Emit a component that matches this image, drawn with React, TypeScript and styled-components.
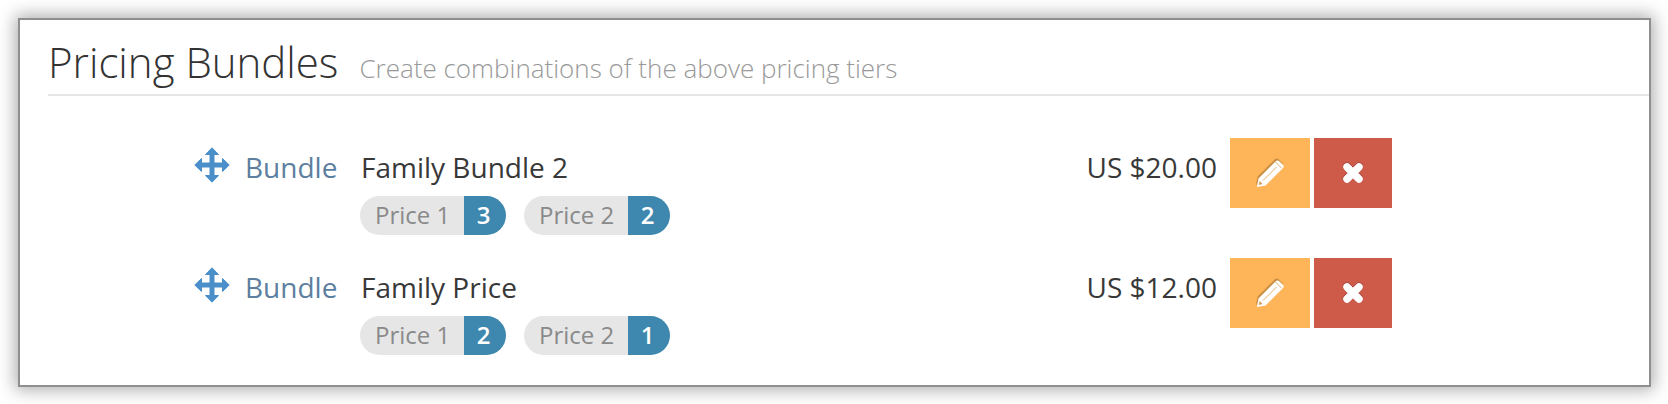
import React from 'react';
import styled, { createGlobalStyle } from 'styled-components';

const GlobalStyle = createGlobalStyle`
    html, body {
        margin: 0;
        padding: 0;
        background: #ffffff;
    }
    body {
        width: 1668px;
        height: 404px;
        overflow: hidden;
        font-family: "Open Sans", "Liberation Sans", sans-serif;
    }
`;

const Page = styled.div`
    padding: 18px 17px 17px 18px;
    box-sizing: border-box;
    width: 1668px;
    height: 404px;
`;

const Window = styled.div`
    box-sizing: border-box;
    height: 369px;
    background: #ffffff;
    border: 2px solid #8f8f8f;
    box-shadow: 0 0 16px 3px rgba(0, 0, 0, 0.32);
    padding: 0 0 0 28px;
`;

const Header = styled.div`
    display: flex;
    align-items: baseline;
    height: 76px;
    box-sizing: border-box;
    padding: 19px 0 0 0;
    border-bottom: 2px solid #e5e5e5;
`;

const Title = styled.h1`
    margin: 0;
    font-size: 42px;
    line-height: 46px;
    font-weight: 300;
    color: #333333;
`;

const Subtitle = styled.span`
    margin-left: 21px;
    font-size: 26px;
    font-weight: 300;
    color: #999999;
`;

const List = styled.div`
    display: flex;
    flex-direction: column;
    gap: 50px;
    padding: 42px 0 0 146px;
`;

const Row = styled.div`
    display: flex;
    align-items: flex-start;
    height: 70px;
`;

const Handle = styled.svg`
    width: 36px;
    height: 36px;
    margin-top: 9px;
    fill: #4a8fc9;
    stroke: #4a8fc9;
    stroke-width: 1;
    stroke-linejoin: round;
`;

const Kind = styled.span`
    margin: 10px 0 0 15px;
    width: 116px;
    font-size: 28px;
    line-height: 38px;
    color: #5d7f9f;
`;

const Info = styled.div`
    width: 638px;
`;

const Name = styled.div`
    padding-top: 10px;
    font-size: 28px;
    line-height: 38px;
    color: #383838;
`;

const Tags = styled.div`
    display: flex;
    gap: 18px;
    margin: 10px 0 0 -1px;
`;

const Tag = styled.div`
    display: flex;
    height: 39px;
    font-size: 24px;
    line-height: 38px;
    border-radius: 19.5px;
    overflow: hidden;
`;

const TagLabel = styled.span`
    width: 104px;
    padding-left: 15px;
    box-sizing: border-box;
    background: #e6e6e6;
    color: #8a8a8a;
`;

const TagCount = styled.span`
    width: 42px;
    padding-right: 3px;
    box-sizing: border-box;
    text-align: center;
    background: #3e87ae;
    color: #ffffff;
    font-weight: 600;
`;

const Price = styled.div`
    width: 218px;
    padding-top: 10px;
    text-align: right;
    font-size: 28px;
    line-height: 38px;
    color: #383838;
`;

const Actions = styled.div`
    display: flex;
    gap: 4px;
    margin-left: 13px;
`;

const ActionButton = styled.button<{ $color: string; $width: number }>`
    display: flex;
    align-items: center;
    justify-content: center;
    width: ${p => p.$width}px;
    height: 70px;
    padding: 0;
    border: 0;
    color: #ffffff;
    background: ${p => p.$color};
`;

const MoveIcon = () => (
    <Handle viewBox="0 0 36 36">
        <path d="M18 .8l6.500 6.700H20v8.500h8.500V11.500l6.700 6.500-6.700 6.500V20H20v8.500h4.500L18 35.200l-6.500-6.700H16V20H7.500v4.500L.8 18l6.700-6.500V16H16V7.500h-4.500z" />
    </Handle>
);

const PencilIcon = () => (
    <svg width="30" height="30" viewBox="0 0 30 30">
        <path fill="#c98f45" d="M1 27l1.500-8.500L19.500 1.500c1.500-1.500 3-1.500 4.500 0l4 4.500-8 1.500L8 20z" />
        <path fill="#ffffff" d="M2 29l1.500-8.500L20.500 3.500c1.500-1.500 2.500-1.500 4 0l3 3c1.500 1.500 1.500 2.500 0 4L10.500 27.500z" />
        <path fill="none" stroke="#d69a4e" strokeWidth=".8" d="M8 22.500L21.500 9M20 3.500l6.500 6.500" />
        <path fill="#d69a4e" d="M4.500 23l3 3-3.500 1z" />
    </svg>
);

const CrossIcon = () => (
    <svg width="24" height="24" viewBox="0 0 24 24">
        <path fill="none" stroke="#a8433a" strokeWidth="8.500" strokeLinecap="round" d="M6 5.500l12 12M18 5.500l-12 12" />
        <path fill="none" stroke="#ffffff" strokeWidth="7.500" strokeLinecap="round" d="M6 6l12 12M18 6L6 18" />
    </svg>
);

const bundles = [
    { name: 'Family Bundle 2', price: 'US $20.00', tiers: [3, 2] },
    { name: 'Family Price', price: 'US $12.00', tiers: [2, 1] },
];

const App = () => (
    <Page>
        <GlobalStyle />
        <Window>
            <Header>
                <Title>Pricing Bundles</Title>
                <Subtitle>Create combinations of the above pricing tiers</Subtitle>
            </Header>
            <List>
                {bundles.map(bundle => (
                    <Row key={bundle.name}>
                        <MoveIcon />
                        <Kind>Bundle</Kind>
                        <Info>
                            <Name>{bundle.name}</Name>
                            <Tags>
                                {bundle.tiers.map((count, i) => (
                                    <Tag key={i}>
                                        <TagLabel>Price {i + 1}</TagLabel>
                                        <TagCount>{count}</TagCount>
                                    </Tag>
                                ))}
                            </Tags>
                        </Info>
                        <Price>{bundle.price}</Price>
                        <Actions>
                            <ActionButton $color="#feb55a" $width={80}><PencilIcon /></ActionButton>
                            <ActionButton $color="#ce5a4a" $width={78}><CrossIcon /></ActionButton>
                        </Actions>
                    </Row>
                ))}
            </List>
        </Window>
    </Page>
);

export default App;
